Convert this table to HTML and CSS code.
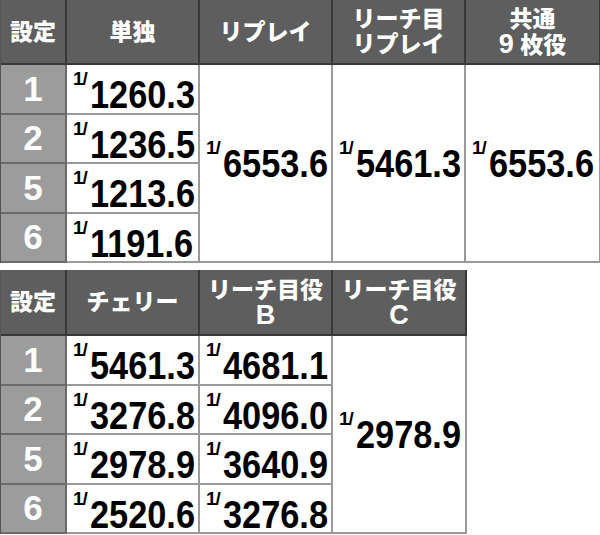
FILE: index.html
```html
<!DOCTYPE html>
<html lang="ja">
<head>
<meta charset="utf-8">
<link rel="stylesheet" href="styles.css">
</head>
<body>
<div class="page">
  <div class="tbl t1">
    <div class="h">設定</div>
    <div class="h">単独</div>
    <div class="h">リプレイ</div>
    <div class="h two"><span class="ln">リーチ目</span><span class="ln">リプレイ</span></div>
    <div class="h two"><span class="ln">共通</span><span class="ln"><span class="lat">9</span> 枚役</span></div>

    <div class="s r2">1</div>
    <div class="v r2"><span class="val"><span class="sup">1/</span><span class="num">1260.3</span></span></div>
    <div class="v m c3"><span class="val"><span class="sup">1/</span><span class="num">6553.6</span></span></div>
    <div class="v m c4"><span class="val"><span class="sup">1/</span><span class="num">5461.3</span></span></div>
    <div class="v m c5"><span class="val"><span class="sup">1/</span><span class="num">6553.6</span></span></div>

    <div class="s">2</div>
    <div class="v"><span class="val"><span class="sup">1/</span><span class="num">1236.5</span></span></div>
    <div class="s">5</div>
    <div class="v"><span class="val"><span class="sup">1/</span><span class="num">1213.6</span></span></div>
    <div class="s">6</div>
    <div class="v"><span class="val"><span class="sup">1/</span><span class="num">1191.6</span></span></div>
  </div>

  <div class="tbl t2">
    <div class="h">設定</div>
    <div class="h">チェリー</div>
    <div class="h two"><span class="ln">リーチ目役</span><span class="ln lat">B</span></div>
    <div class="h two"><span class="ln">リーチ目役</span><span class="ln lat">C</span></div>

    <div class="s">1</div>
    <div class="v"><span class="val"><span class="sup">1/</span><span class="num">5461.3</span></span></div>
    <div class="v"><span class="val"><span class="sup">1/</span><span class="num">4681.1</span></span></div>
    <div class="v m c4"><span class="val"><span class="sup">1/</span><span class="num">2978.9</span></span></div>

    <div class="s">2</div>
    <div class="v"><span class="val"><span class="sup">1/</span><span class="num">3276.8</span></span></div>
    <div class="v"><span class="val"><span class="sup">1/</span><span class="num">4096.0</span></span></div>
    <div class="s">5</div>
    <div class="v"><span class="val"><span class="sup">1/</span><span class="num">2978.9</span></span></div>
    <div class="v"><span class="val"><span class="sup">1/</span><span class="num">3640.9</span></span></div>
    <div class="s">6</div>
    <div class="v"><span class="val"><span class="sup">1/</span><span class="num">2520.6</span></span></div>
    <div class="v"><span class="val"><span class="sup">1/</span><span class="num">3276.8</span></span></div>
  </div>
</div>
</body>
</html>
```

FILE: styles.css
```css
* { box-sizing: border-box; }
html, body { margin: 0; padding: 0; background: #fff; }
.page {
  width: 600px;
  height: 535px;
  display: flex;
  flex-direction: column;
  gap: 7px;
}
.tbl {
  display: grid;
  border-left: 1px solid #555;
}
.t1 {
  width: 600px;
  grid-template-columns: 66px 133px 133px 133px 135px;
  grid-template-rows: 65px repeat(4, 49.5px);
}
.t2 {
  width: 466px;
  grid-template-columns: 66px 133px 133px 134px;
  grid-template-rows: 66px repeat(4, 49.5px);
}
.h {
  background: #5e5e5e;
  color: #fff;
  font-family: "Liberation Sans", "Noto Sans CJK JP", sans-serif;
  font-weight: 900;
  font-size: 23px;
  line-height: 25px;
  text-align: center;
  display: flex;
  flex-direction: column;
  align-items: center;
  justify-content: center;
  border-right: 2px solid #383838;
  border-bottom: 2px solid #383838;
  padding-top: 1px;
}
.ln {
  display: block;
  height: 25px;
  line-height: 25px;
  white-space: nowrap;
}
.lat {
  font-family: "Liberation Sans", Arial, sans-serif;
  font-weight: 700;
  font-size: 27px;
}
.s {
  background: #9c9c9c;
  color: #fff;
  font-family: "Liberation Sans", Arial, sans-serif;
  font-weight: 700;
  font-size: 35px;
  display: flex;
  align-items: center;
  justify-content: center;
  border-right: 2px solid #6a6a6a;
  border-bottom: 2px solid #6a6a6a;
}
.v {
  background: #fff;
  display: flex;
  align-items: center;
  padding-left: 6px;
  padding-top: 12px;
  border-right: 2px solid #9a9a9a;
  border-bottom: 2px solid #9a9a9a;
}
.v.m { padding-top: 0; grid-row: 2 / span 4; }
.c3 { grid-column: 3; }
.c4 { grid-column: 4; }
.c5 { grid-column: 5; }
.val {
  display: flex;
  align-items: flex-start;
  color: #000;
  font-family: "Liberation Sans", Arial, sans-serif;
  font-weight: 700;
}
.sup {
  font-size: 19px;
  line-height: 1;
  margin-top: -6px;
  margin-right: 3px;
  letter-spacing: -1px;
}
.num {
  display: inline-block;
  font-size: 39px;
  line-height: 1;
  transform: scaleX(0.88);
  transform-origin: left center;
  margin-right: -14px;
}
```
